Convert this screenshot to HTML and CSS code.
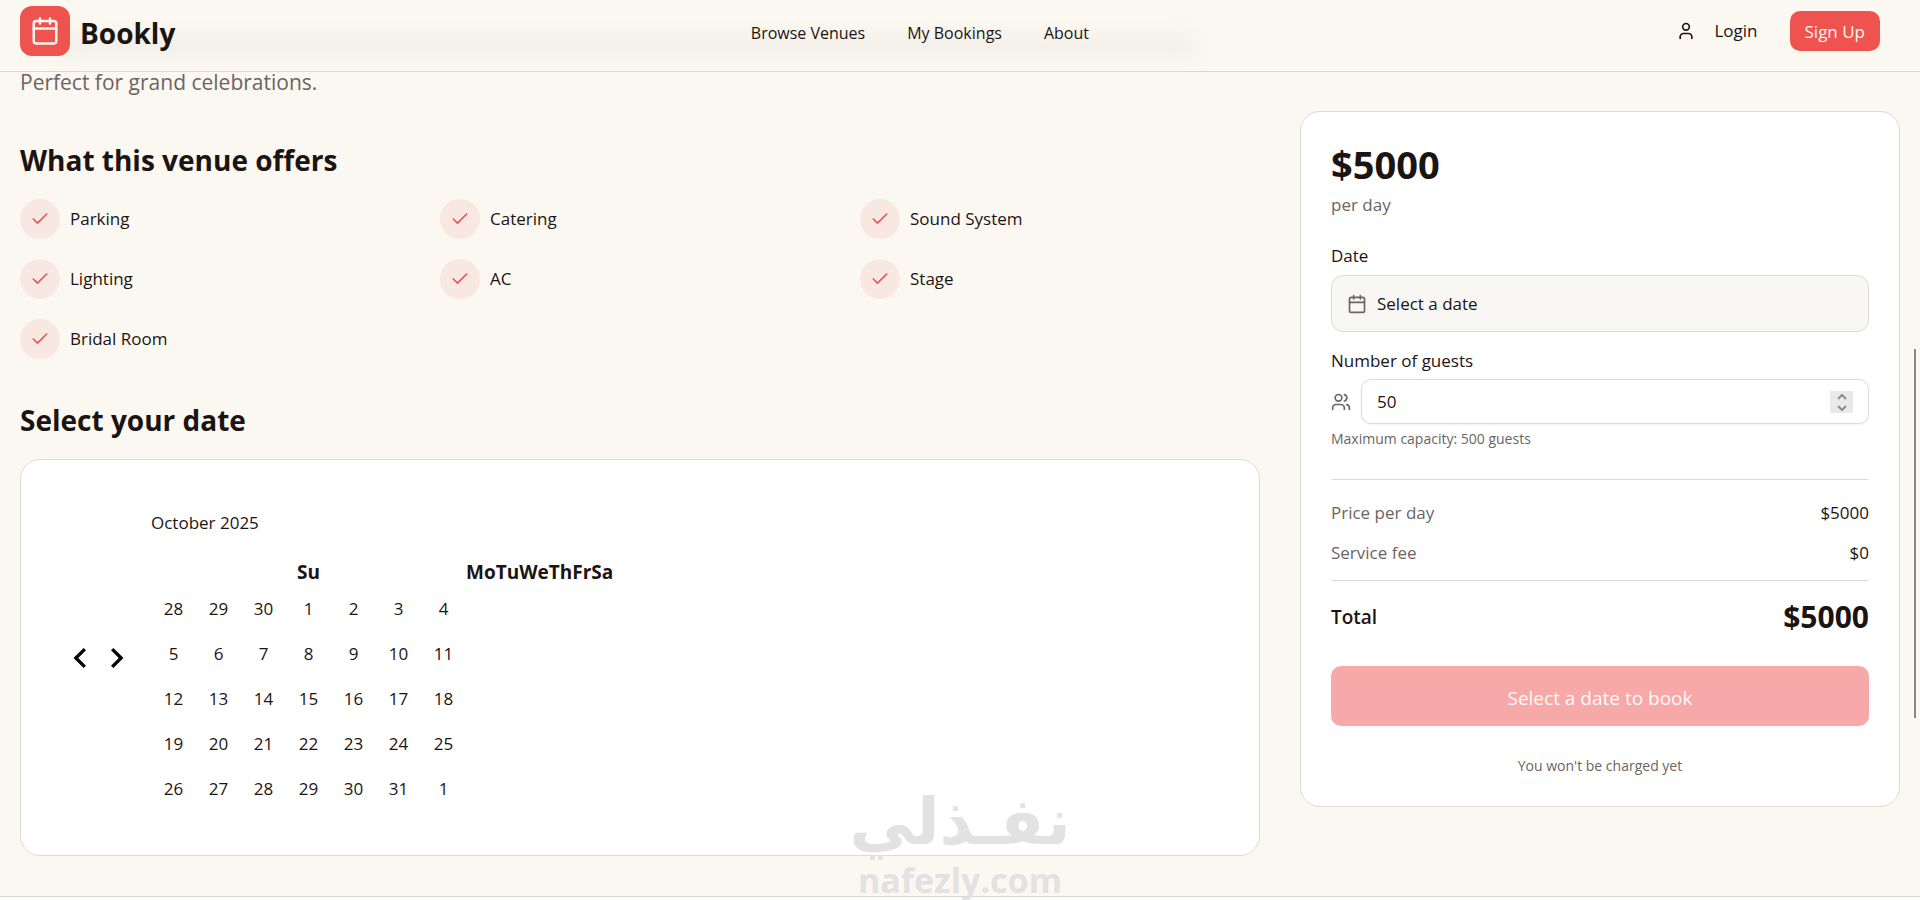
FILE: index.html
```html
<!DOCTYPE html>
<html lang="en">
<head>
  <meta charset="UTF-8">
  <meta name="viewport" content="width=device-width, initial-scale=1.0">
  <title>Bookly</title>
  <link rel="stylesheet" href="styles.css">
</head>
<body>
  <!-- icons -->
  <svg class="sprite" aria-hidden="true">
    <symbol id="calendar" viewBox="0 0 24 24"><path d="M8 2v4M16 2v4M3 10h18"/><rect x="3" y="4" width="18" height="18" rx="2"/></symbol>
    <symbol id="check" viewBox="0 0 24 24"><path d="M20 6 9 17l-5-5"/></symbol>
    <symbol id="user" viewBox="0 0 24 24"><path d="M19 21v-2a4 4 0 0 0-4-4H9a4 4 0 0 0-4 4v2"/><circle cx="12" cy="7" r="4"/></symbol>
    <symbol id="users" viewBox="0 0 24 24"><path d="M16 21v-2a4 4 0 0 0-4-4H6a4 4 0 0 0-4 4v2"/><circle cx="9" cy="7" r="4"/><path d="M22 21v-2a4 4 0 0 0-3-3.87M16 3.13a4 4 0 0 1 0 7.75"/></symbol>
    <symbol id="up" viewBox="0 0 10 6"><path d="M1 5l4-4 4 4"/></symbol>
    <symbol id="down" viewBox="0 0 10 6"><path d="M1 1l4 4 4-4"/></symbol>
  </svg>

  <header class="header">
    <a class="logo" href="#">
      <span class="logo-tile"><svg class="icon icon-lg"><use href="#calendar"/></svg></span>
      <span class="logo-name">Bookly</span>
    </a>
    <nav class="menu">
      <a href="#">Browse Venues</a>
      <a href="#">My Bookings</a>
      <a href="#">About</a>
    </nav>
    <div class="account">
      <button class="login"><svg class="icon"><use href="#user"/></svg>Login</button>
      <button class="signup">Sign Up</button>
    </div>
  </header>

  <main class="main">
    <div class="details">
      <p class="description">Perfect for grand celebrations.</p>

      <section>
        <h2>What this venue offers</h2>
        <ul class="amenities">
          <li><span class="tick"><svg class="icon"><use href="#check"/></svg></span>Parking</li>
          <li><span class="tick"><svg class="icon"><use href="#check"/></svg></span>Catering</li>
          <li><span class="tick"><svg class="icon"><use href="#check"/></svg></span>Sound System</li>
          <li><span class="tick"><svg class="icon"><use href="#check"/></svg></span>Lighting</li>
          <li><span class="tick"><svg class="icon"><use href="#check"/></svg></span>AC</li>
          <li><span class="tick"><svg class="icon"><use href="#check"/></svg></span>Stage</li>
          <li><span class="tick"><svg class="icon"><use href="#check"/></svg></span>Bridal Room</li>
        </ul>
      </section>

      <section>
        <h2>Select your date</h2>
        <div class="card calendar">
          <div class="arrows">
            <button aria-label="Previous month"><svg viewBox="0 0 24 24"><polygon points="16 18.112 9.811 12 16 5.877 14.089 4 6 12 14.089 20"/></svg></button>
            <button aria-label="Next month"><svg viewBox="0 0 24 24"><polygon points="8 18.112 14.189 12 8 5.877 9.911 4 18 12 9.911 20"/></svg></button>
          </div>
          <div class="month">
            <div class="month-name">October 2025</div>
            <table>
              <thead>
                <tr><th colspan="7">Su</th><th>Mo</th><th>Tu</th><th>We</th><th>Th</th><th>Fr</th><th>Sa</th></tr>
              </thead>
              <tbody>
                <tr><td><button>28</button></td><td><button>29</button></td><td><button>30</button></td><td><button>1</button></td><td><button>2</button></td><td><button>3</button></td><td><button>4</button></td></tr>
                <tr><td><button>5</button></td><td><button>6</button></td><td><button>7</button></td><td><button>8</button></td><td><button>9</button></td><td><button>10</button></td><td><button>11</button></td></tr>
                <tr><td><button>12</button></td><td><button>13</button></td><td><button>14</button></td><td><button>15</button></td><td><button>16</button></td><td><button>17</button></td><td><button>18</button></td></tr>
                <tr><td><button>19</button></td><td><button>20</button></td><td><button>21</button></td><td><button>22</button></td><td><button>23</button></td><td><button>24</button></td><td><button>25</button></td></tr>
                <tr><td><button>26</button></td><td><button>27</button></td><td><button>28</button></td><td><button>29</button></td><td><button>30</button></td><td><button>31</button></td><td><button>1</button></td></tr>
              </tbody>
            </table>
          </div>
        </div>
      </section>
    </div>

    <aside class="card booking">
      <div class="price">$5000</div>
      <div class="muted">per day</div>

      <label class="date-label" for="date">Date</label>
      <button class="date" id="date"><svg class="icon"><use href="#calendar"/></svg>Select a date</button>

      <label class="guests-label" for="guests">Number of guests</label>
      <div class="guests">
        <svg class="icon"><use href="#users"/></svg>
        <div class="guests-field">
          <input type="number" id="guests" value="50" min="1" max="500">
          <div class="spinner">
            <button aria-label="More guests"><svg><use href="#up"/></svg></button>
            <button aria-label="Fewer guests"><svg><use href="#down"/></svg></button>
          </div>
        </div>
      </div>
      <p class="small">Maximum capacity: 500 guests</p>

      <div class="fees">
        <div class="row"><span class="muted">Price per day</span><span>$5000</span></div>
        <div class="row"><span class="muted">Service fee</span><span>$0</span></div>
      </div>
      <div class="row total"><span>Total</span><strong>$5000</strong></div>

      <button class="book" disabled>Select a date to book</button>
      <p class="small note">You won't be charged yet</p>
    </aside>
  </main>

  <footer class="footer"></footer>

  <div class="watermark">
    <div class="watermark-ar" lang="ar" dir="rtl">نفـذلي</div>
    <div class="watermark-en">nafezly.com</div>
  </div>
  <div class="scrollbar"></div>

  <script>
    let guests = document.getElementById("guests");
    let steps = document.querySelectorAll(".spinner button");

    steps[0].addEventListener("click", () => guests.stepUp());
    steps[1].addEventListener("click", () => guests.stepDown());
  </script>
</body>
</html>
```
FILE: styles.css
```css
* {
  box-sizing: border-box;
}
body {
  margin: 0;
  min-height: 100vh;
  display: flex;
  flex-direction: column;
  position: relative;
  background-color: #fbf8f1;
  color: #1c1412;
  font-family: "Open Sans", "Noto Sans", sans-serif;
  font-size: 17px;
  line-height: 26px;
}
h2, p, ul {
  margin: 0;
  padding: 0;
}
a {
  color: inherit;
  text-decoration: none;
}
button {
  padding: 0;
  border: none;
  background: none;
  color: inherit;
  font: inherit;
  cursor: pointer;
}
.sprite {
  display: none;
}
.icon {
  width: 20px;
  height: 20px;
  flex-shrink: 0;
  fill: none;
  stroke: currentColor;
  stroke-width: 2;
  stroke-linecap: round;
  stroke-linejoin: round;
}
.icon-lg {
  width: 30px;
  height: 30px;
}

/* header */
.header {
  position: sticky;
  top: 0;
  z-index: 2;
  display: flex;
  justify-content: space-between;
  align-items: center;
  padding: 6px 40px 15px 20px;
  background-color: #fbf8f1;
  border-bottom: 1px solid #dad8d3;
}
.header::before {
  content: "";
  position: absolute;
  z-index: -1;
  left: 60px;
  top: 38px;
  width: 59%;
  height: 16px;
  background-color: #efece7;
  filter: blur(10px);
}
.logo {
  display: flex;
  align-items: center;
  gap: 10px;
}
.logo-tile {
  display: flex;
  align-items: center;
  justify-content: center;
  width: 50px;
  height: 50px;
  border-radius: 12px;
  background-color: #ef5350;
  color: #fdf6f0;
}
.logo-name {
  padding-top: 4px;
  font-size: 28px;
  font-weight: 700;
}
.menu {
  display: flex;
  gap: 42px;
  padding-top: 4px;
  font-size: 16px;
}
.account {
  display: flex;
  gap: 20px;
}
.login {
  display: flex;
  align-items: center;
  gap: 18px;
  height: 40px;
  padding: 0 12px;
}
.signup {
  height: 40px;
  padding: 2px 15px 0;
  border-radius: 10px;
  background-color: #ef5350;
  color: #fdf6f0;
}

/* venue */
.main {
  display: grid;
  grid-template-columns: repeat(3, 1fr);
  gap: 40px;
  align-items: start;
  padding: 0 20px 40px;
}
.details {
  grid-column: span 2;
  display: flex;
  flex-direction: column;
  gap: 40px;
}
.description {
  margin-bottom: 7px;
  font-size: 21px;
  line-height: 20px;
  color: #6b6462;
}
h2 {
  margin-bottom: 20px;
  padding-top: 2px;
  font-size: 28px;
  line-height: 38px;
}
.amenities {
  display: grid;
  grid-template-columns: repeat(3, 1fr);
  gap: 20px;
  list-style: none;
}
.amenities li {
  display: flex;
  align-items: center;
  gap: 10px;
}
.tick {
  display: flex;
  align-items: center;
  justify-content: center;
  width: 40px;
  height: 40px;
  border-radius: 50%;
  background-color: #f9e8e2;
  color: #ea5455;
}
.card {
  background-color: #fff;
  border: 1px solid #dbdbd9;
  border-radius: 20px;
}

/* calendar */
.calendar {
  display: flex;
  align-items: center;
  gap: 20px;
  padding: 45px;
}
.arrows {
  display: flex;
  gap: 5px;
}
.arrows svg {
  display: block;
  width: 30px;
  height: 30px;
  fill: #000;
}
.month-name {
  margin-bottom: 15px;
  line-height: 35px;
}
table {
  border-collapse: collapse;
}
th {
  height: 30px;
  padding: 4px 0 0;
  font-size: 19px;
}
td {
  padding: 0;
}
td button {
  display: block;
  width: 45px;
  height: 45px;
  padding-top: 2px;
}

/* booking card */
.booking {
  display: flex;
  flex-direction: column;
  margin-top: 39px;
  padding: 30px;
}
.price {
  margin-bottom: 5px;
  font-size: 38px;
  font-weight: 700;
  line-height: 45px;
}
.muted {
  color: #6b6462;
}
.date-label {
  margin: 25px 0 6px;
}
.date {
  display: flex;
  align-items: center;
  gap: 10px;
  height: 57px;
  padding: 0 15px;
  border: 1px solid #dbdbd9;
  border-radius: 12px;
  background-color: #f8f7f4;
}
.date .icon,
.guests .icon {
  color: #6b6462;
}
.guests-label {
  margin: 16px 0 5px;
}
.guests {
  display: flex;
  align-items: center;
  gap: 10px;
}
.guests-field {
  position: relative;
  flex: 1;
}
input {
  display: block;
  width: 100%;
  height: 45px;
  padding: 0 15px;
  border: 1px solid #dbdbd9;
  border-radius: 10px;
  background-color: #fff;
  box-shadow: 0 1px 2px rgba(0, 0, 0, 0.06);
  color: inherit;
  font: inherit;
  appearance: textfield;
}
input::-webkit-inner-spin-button {
  display: none;
}
.spinner {
  position: absolute;
  top: 12px;
  right: 16px;
  display: flex;
  flex-direction: column;
  width: 23px;
  height: 22px;
  background-color: #e9e9eb;
}
.spinner button {
  display: flex;
  flex: 1;
  align-items: center;
  justify-content: center;
}
.spinner svg {
  width: 10px;
  height: 6px;
  fill: none;
  stroke: #8b8b8e;
  stroke-width: 2;
}
.small {
  margin-top: 5px;
  font-size: 14px;
  line-height: 20px;
  color: #6b6462;
}
.fees {
  display: flex;
  flex-direction: column;
  gap: 14px;
  margin: 30px 0 16px;
  padding: 20px 0 14px;
  border-top: 1px solid #dbdbd9;
  border-bottom: 1px solid #dbdbd9;
}
.row {
  display: flex;
  align-items: center;
  justify-content: space-between;
}
.total {
  font-size: 19px;
  font-weight: 600;
  line-height: 40px;
}
.total strong {
  font-size: 30px;
  font-weight: 700;
}
.book {
  height: 60px;
  margin-top: 29px;
  padding-top: 4px;
  border-radius: 10px;
  background-color: #f6a9a8;
  color: #fefaf6;
  font-size: 19px;
  cursor: default;
}
.note {
  margin-top: 30px;
  text-align: center;
}

.footer {
  flex: 1;
  background-color: #fefefe;
  border-top: 1px solid #dad8d3;
}

/* overlays */
.watermark {
  position: absolute;
  left: 50%;
  bottom: 0;
  transform: translateX(-50%);
  color: #e2e2e2;
  text-align: center;
  white-space: nowrap;
  pointer-events: none;
}
.watermark-ar {
  font-family: "DejaVu Sans", sans-serif;
  font-size: 65px;
  font-weight: 700;
  line-height: 76px;
}
.watermark-en {
  font-size: 34px;
  font-weight: 700;
  line-height: 40px;
}
.scrollbar {
  position: fixed;
  top: 349px;
  right: 4px;
  width: 2px;
  height: 41vh;
  background-color: #8a8784;
}
```
